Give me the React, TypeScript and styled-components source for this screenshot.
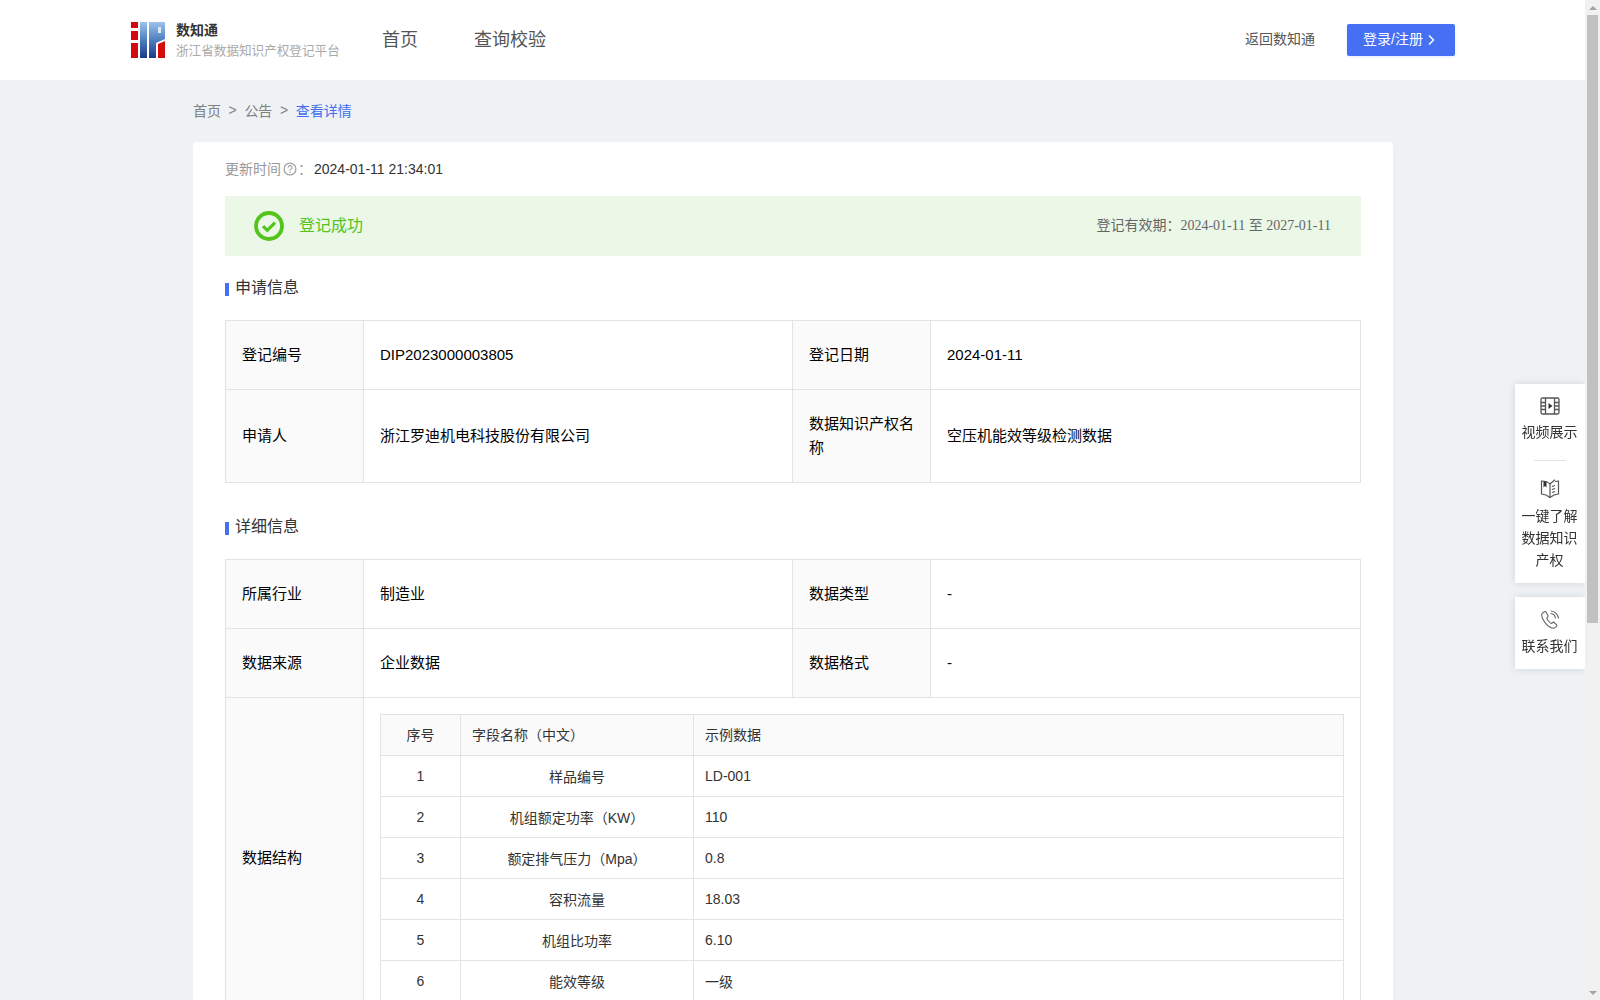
import React from "react";
import styled, { createGlobalStyle } from "styled-components";

const CJK = `"Liberation Sans", "Noto Sans CJK SC", sans-serif`;

const Global = createGlobalStyle`
  html, body { margin: 0; padding: 0; background: #eff2f5; }
  html { scrollbar-width: none; }
  body { font-family: ${CJK}; color: #333; }
`;

const Header = styled.header`
  height: 80px;
  background: #fff;
  display: flex;
  align-items: center;
  padding: 0 145px 0 131px;
`;
const Brand = styled.div`
  display: flex;
  align-items: center;
  gap: 11px;
  width: 251px;
`;
const BrandText = styled.div`
  display: flex;
  flex-direction: column;
  gap: 4px;
`;
const BrandName = styled.div`
  font-size: 14px;
  line-height: 18px;
  font-weight: 700;
  color: #333;
`;
const BrandSub = styled.div`
  font-size: 12.6px;
  line-height: 16px;
  color: #aaa;
  white-space: nowrap;
`;
const Nav = styled.nav`
  display: flex;
  gap: 56px;
  flex: 1;
  padding-bottom: 4px;
`;
const NavLink = styled.a`
  font-size: 18px;
  color: #555;
`;
const BackLink = styled.a`
  font-size: 14px;
  color: #555;
  margin-right: 32px;
  padding-bottom: 4px;
`;
const LoginButton = styled.button`
  width: 108px;
  height: 32px;
  border: 0;
  border-radius: 2px;
  background: #4570f3;
  color: #fff;
  font: inherit;
  font-size: 14px;
  display: flex;
  align-items: center;
  justify-content: center;
  gap: 4px;
  padding: 0 4px 4px 0;
  box-shadow: 0 1px 3px rgba(69, 112, 243, 0.15);
`;
const Main = styled.main`
  width: 1200px;
  margin-left: 193px;
  padding-bottom: 40px;
`;
const Crumbs = styled.div`
  height: 59px;
  padding-bottom: 3px;
  display: flex;
  align-items: center;
  font-size: 14px;
  color: #808080;
`;
const CrumbSep = styled.span`
  margin: 0 7.6px;
`;
const CrumbCurrent = styled.span`
  color: #3f6ff0;
`;
const Card = styled.section`
  background: #fff;
  border-radius: 4px;
  padding: 16px 32px 530px;
`;
const UpdateRow = styled.div`
  display: flex;
  align-items: center;
  height: 20px;
  font-size: 14px;
  color: #999;
  margin-bottom: 18px;
`;
const UpdateValue = styled.span`
  color: #333;
  margin-left: 2px;
  padding-top: 1px;
`;
const StatusBar = styled.div`
  height: 60px;
  background: #ebf7e7;
  display: flex;
  align-items: center;
  justify-content: space-between;
  padding: 0 30px 0 29px;
`;
const StatusLeft = styled.div`
  display: flex;
  align-items: center;
  gap: 15px;
  font-size: 16px;
  color: #52c41a;
`;
const StatusText = styled.span`
  padding-bottom: 5px;
`;
const StatusRight = styled.div`
  font-size: 14px;
  color: #666;
  padding-bottom: 5px;
  font-family: "Liberation Serif", "Noto Sans CJK SC", serif;
`;
const SectionTitle = styled.h2<{ $top: number }>`
  margin: ${(p) => p.$top}px 0 22px;
  height: 21px;
  display: flex;
  align-items: center;
  gap: 6px;
  font-size: 16px;
  line-height: 21px;
  font-weight: 400;
  color: #333;
  &::before {
    content: "";
    width: 4px;
    height: 13px;
    margin-top: 3px;
    background: #4570f3;
  }
`;
const InfoTable = styled.table`
  width: 1135px;
  border-collapse: collapse;
  table-layout: fixed;
  font-size: 15px;
  color: #000;
`;
const Column = styled.col<{ $w: number }>`
  width: ${(p) => p.$w}px;
`;
const Label = styled.th`
  background: #fafafa;
  border: 1px solid #e3e3e3;
  padding: 0 15px 0 16px;
  text-align: left;
  font-weight: 400;
  line-height: 24px;
`;
const Value = styled.td<{ $h?: number }>`
  border: 1px solid #e3e3e3;
  padding: 0 15px 0 16px;
  height: ${(p) => p.$h ?? 68}px;
  line-height: 24px;
`;
const NestedCell = styled.td`
  border: 1px solid #e3e3e3;
  padding: 16px;
  vertical-align: top;
`;
const FieldTable = styled.table`
  width: 963px;
  border-collapse: collapse;
  table-layout: fixed;
  font-size: 14px;
  color: #333;
`;
const HeadCell = styled.th<{ $center?: boolean }>`
  height: 38px;
  padding: 0 11px 2px 11px;
  background: #fafafa;
  border: 1px solid #e3e3e3;
  font-weight: 400;
  text-align: ${(p) => (p.$center ? "center" : "left")};
`;
const FieldCell = styled.td<{ $center?: boolean }>`
  height: 40px;
  padding: 0 11px;
  border: 1px solid #e3e3e3;
  text-align: ${(p) => (p.$center ? "center" : "left")};
`;
const Float = styled.aside`
  position: fixed;
  right: 15px;
  top: 384px;
  width: 70px;
  display: flex;
  flex-direction: column;
  gap: 14px;
`;
const FloatCard = styled.div`
  background: #fff;
  box-shadow: 0 0 8px rgba(0, 0, 0, 0.12);
  padding: 13px 1px 12px 0;
  display: flex;
  flex-direction: column;
  align-items: center;
`;
const FloatItem = styled.div<{ $gap: number }>`
  display: flex;
  flex-direction: column;
  align-items: center;
  text-align: center;
  font-size: 14px;
  line-height: 22px;
  color: #333;
  width: 56px;
  gap: ${(p) => p.$gap}px;
`;
const FloatRule = styled.div`
  width: 32px;
  height: 1px;
  background: #e3e3e3;
  margin: 17px 0 18px;
`;
const ScrollTrack = styled.div`
  position: fixed;
  top: 0;
  right: 0;
  bottom: 0;
  width: 15px;
  background: #f1f1f1;
  display: flex;
  flex-direction: column;
  align-items: center;
  z-index: 5;
`;
const ScrollArrow = styled.div<{ $down?: boolean }>`
  width: 15px;
  height: 15px;
  display: flex;
  align-items: center;
  justify-content: center;
  flex: none;
  &::before {
    content: "";
    border-left: 4px solid transparent;
    border-right: 4px solid transparent;
    ${(p) => (p.$down ? "border-top: 4px solid #a3a3a3;" : "border-bottom: 4px solid #a3a3a3;")}
  }
`;
const ScrollThumb = styled.div`
  width: 11px;
  height: 608px;
  background: #c1c1c1;
  flex: none;
`;
const ScrollSpace = styled.div`
  flex: 1;
`;

const Logo = () => (
  <svg width="34" height="36" viewBox="0 0 34 36" aria-hidden="true">
    <defs>
      <linearGradient id="logoBlue" x1="0" y1="0" x2="0" y2="1">
        <stop offset="0" stopColor="#9cc3ea" />
        <stop offset="0.5" stopColor="#4f7fc0" />
        <stop offset="1" stopColor="#1d3a85" />
      </linearGradient>
    </defs>
    <rect x="0" y="0" width="7" height="6" fill="#d40a0d" />
    <rect x="0" y="9" width="7" height="9" fill="#d40a0d" />
    <rect x="0" y="21" width="7" height="15" fill="#d40a0d" />
    <rect x="9" y="0" width="7" height="36" fill="url(#logoBlue)" />
    <path d="M18 0h16v17l-9 4v15h-7z" fill="url(#logoBlue)" />
    <path d="M27 5h3v6h-3z" fill="#dbe8f6" />
    <path d="M34 19v17h-7V22z" fill="#d40a0d" />
  </svg>
);

const SuccessIcon = () => (
  <svg width="30" height="30" viewBox="0 0 30 30" aria-hidden="true">
    <circle cx="15" cy="15" r="13" fill="none" stroke="#52c41a" strokeWidth="3.8" />
    <path d="M9 15.200l4.300 4.100 7.700-7.600" fill="none" stroke="#52c41a" strokeWidth="3.200" />
  </svg>
);

const HelpIcon = () => (
  <svg width="14" height="14" viewBox="0 0 14 14" style={{ margin: "2px 1px 0 2px" }} aria-hidden="true">
    <circle cx="7" cy="7" r="5.900" fill="none" stroke="#a3a3a3" strokeWidth="1.300" />
    <path d="M5.200 5.500a1.900 1.900 0 1 1 2.700 1.700c-.6.3-.9.6-.9 1.300" fill="none" stroke="#a3a3a3" strokeWidth="1.200" />
    <circle cx="7" cy="10.200" r=".8" fill="#a3a3a3" />
  </svg>
);

const FilmIcon = () => (
  <svg width="20" height="18" viewBox="0 0 20 18" fill="none" stroke="#555" strokeWidth="1.300" aria-hidden="true">
    <rect x="1" y="1" width="18" height="16" rx="1.500" />
    <path d="M5.500 1v16M14.500 1v16M1 5.500h4.500M1 9h4.500M1 12.500h4.500M14.500 5.500H19M14.500 9H19M14.500 12.500H19" />
    <path d="M8.500 6l4 3-4 3z" fill="#333" stroke="none" />
  </svg>
);

const BookIcon = () => (
  <svg width="20" height="20" viewBox="0 0 20 20" fill="none" stroke="#555" strokeWidth="1.200" aria-hidden="true">
    <path d="M10 5C8 3 4.500 2 1.500 2v13c3 .2 6 1.400 8.500 3.500 2.500-2.100 5.500-3.300 8.500-3.500V2c-1.200 0-2.400.2-3.500.5" />
    <path d="M10 5v13.500M15 .8 10 5" />
    <path d="M3.500 2.500h3v6l-1.500-1.500-1.500 1.500z" fill="#333" stroke="none" />
    <path d="M12 7.500l3-1M12 10.500l3-1M12 13.500l3-1" />
  </svg>
);

const PhoneIcon = () => (
  <svg width="20" height="20" viewBox="0 0 20 20" fill="none" stroke="#666" strokeWidth="1.100" aria-hidden="true">
    <path d="M4.500 1.800 2.300 3.200C.9 4.300 1.800 8.300 5 12.600c3.200 4.200 7.500 6.400 9.300 5.500l2.200-1.700c.5-.5.5-1.100.1-1.600l-2.300-2.300c-.5-.4-1.100-.4-1.600 0l-1.200 1c-1.300-.3-4.400-3.900-4.700-5.400l1-1.300c.4-.5.4-1.100 0-1.600L6.100 2c-.5-.5-1.100-.6-1.600-.2z" />
    <path d="M10.500 3.500c2.700.2 4.800 2.300 5 5M10.800 1c4.200.2 7.400 3.400 7.700 7.500" />
  </svg>
);

const Chevron = () => (
  <svg width="8" height="12" viewBox="0 0 8 12" fill="none" stroke="#fff" strokeWidth="1.500" style={{ marginTop: 4 }} aria-hidden="true">
    <path d="M2 1.500 6.500 6 2 10.500" />
  </svg>
);

const FIELDS: [number, string, string][] = [
  [1, "样品编号", "LD-001"],
  [2, "机组额定功率（KW）", "110"],
  [3, "额定排气压力（Mpa）", "0.8"],
  [4, "容积流量", "18.03"],
  [5, "机组比功率", "6.10"],
  [6, "能效等级", "一级"],
];

const InfoCols = () => (
  <colgroup>
    <Column $w={138} />
    <Column $w={429} />
    <Column $w={138} />
    <Column $w={430} />
  </colgroup>
);

export default function App() {
  return (
    <>
      <Global />
      <Header>
        <Brand>
          <Logo />
          <BrandText>
            <BrandName>数知通</BrandName>
            <BrandSub>浙江省数据知识产权登记平台</BrandSub>
          </BrandText>
        </Brand>
        <Nav>
          <NavLink>首页</NavLink>
          <NavLink>查询校验</NavLink>
        </Nav>
        <BackLink>返回数知通</BackLink>
        <LoginButton>
          登录/注册
          <Chevron />
        </LoginButton>
      </Header>
      <Main>
        <Crumbs>
          首页<CrumbSep>&gt;</CrumbSep>公告<CrumbSep>&gt;</CrumbSep>
          <CrumbCurrent>查看详情</CrumbCurrent>
        </Crumbs>
        <Card>
          <UpdateRow>
            更新时间
            <HelpIcon />：<UpdateValue>2024-01-11 21:34:01</UpdateValue>
          </UpdateRow>
          <StatusBar>
            <StatusLeft>
              <SuccessIcon />
              <StatusText>登记成功</StatusText>
            </StatusLeft>
            <StatusRight>登记有效期：2024-01-11 至 2027-01-11</StatusRight>
          </StatusBar>
          <SectionTitle $top={21}>申请信息</SectionTitle>
          <InfoTable>
            <InfoCols />
            <tbody>
              <tr>
                <Label>登记编号</Label>
                <Value>DIP2023000003805</Value>
                <Label>登记日期</Label>
                <Value>2024-01-11</Value>
              </tr>
              <tr>
                <Label>申请人</Label>
                <Value $h={92}>浙江罗迪机电科技股份有限公司</Value>
                <Label>数据知识产权名称</Label>
                <Value $h={92}>空压机能效等级检测数据</Value>
              </tr>
            </tbody>
          </InfoTable>
          <SectionTitle $top={33}>详细信息</SectionTitle>
          <InfoTable>
            <InfoCols />
            <tbody>
              <tr>
                <Label>所属行业</Label>
                <Value>制造业</Value>
                <Label>数据类型</Label>
                <Value>-</Value>
              </tr>
              <tr>
                <Label>数据来源</Label>
                <Value>企业数据</Value>
                <Label>数据格式</Label>
                <Value>-</Value>
              </tr>
              <tr>
                <Label>数据结构</Label>
                <NestedCell colSpan={3}>
                  <FieldTable>
                    <colgroup>
                      <Column $w={80} />
                      <Column $w={233} />
                      <Column $w={650} />
                    </colgroup>
                    <thead>
                      <tr>
                        <HeadCell $center>序号</HeadCell>
                        <HeadCell>字段名称（中文）</HeadCell>
                        <HeadCell>示例数据</HeadCell>
                      </tr>
                    </thead>
                    <tbody>
                      {FIELDS.map(([n, name, sample]) => (
                        <tr key={n}>
                          <FieldCell $center>{n}</FieldCell>
                          <FieldCell $center>{name}</FieldCell>
                          <FieldCell>{sample}</FieldCell>
                        </tr>
                      ))}
                    </tbody>
                  </FieldTable>
                </NestedCell>
              </tr>
            </tbody>
          </InfoTable>
        </Card>
      </Main>
      <Float>
        <FloatCard>
          <FloatItem $gap={6}>
            <FilmIcon />
            视频展示
          </FloatItem>
          <FloatRule />
          <FloatItem $gap={6}>
            <BookIcon />
            一键了解数据知识产权
          </FloatItem>
        </FloatCard>
        <FloatCard>
          <FloatItem $gap={5}>
            <PhoneIcon />
            联系我们
          </FloatItem>
        </FloatCard>
      </Float>
      <ScrollTrack>
        <ScrollArrow />
        <ScrollThumb />
        <ScrollSpace />
        <ScrollArrow $down />
      </ScrollTrack>
    </>
  );
}
